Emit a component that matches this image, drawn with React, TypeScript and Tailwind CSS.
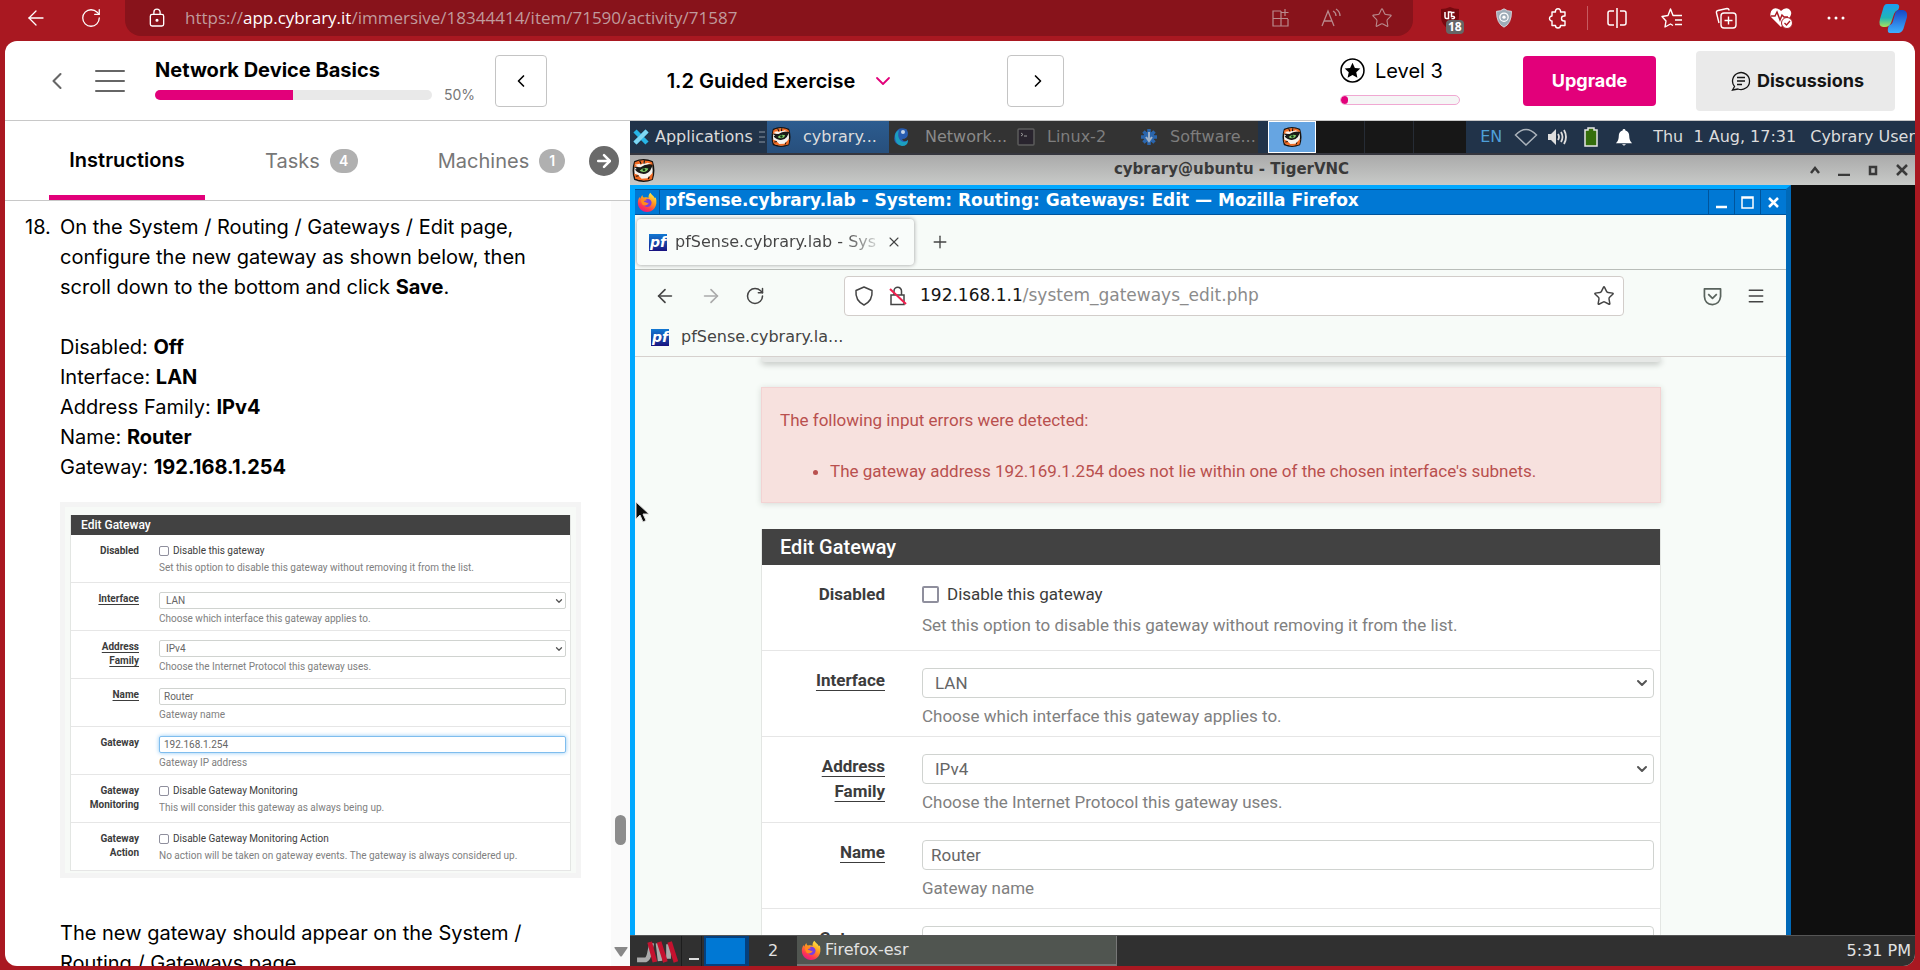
import React, { useId } from "react";
import {
  ArrowLeft,
  ArrowRight,
  ChevronDown,
  ChevronLeft,
  ChevronRight,
  Menu,
  Plus,
  RotateCw,
  Star,
  X,
} from "lucide-react";

type IconProps = { className?: string };

function FirefoxIcon({ className }: IconProps) {
  const id = useId();
  return (
    <svg viewBox="0 0 24 24" className={className} aria-hidden="true">
      <defs>
        <linearGradient id={id} x1="0.8" y1="0" x2="0.25" y2="1">
          <stop offset="0" stopColor="#fff04a" />
          <stop offset="0.4" stopColor="#ff9a1e" />
          <stop offset="0.75" stopColor="#ff3750" />
          <stop offset="1" stopColor="#e3158a" />
        </linearGradient>
      </defs>
      <path
        fill={`url(#${id})`}
        d="M16 1c1 2 4 3.500 5.500 6.500 1-.5 1-1.500 1-1.500C24 12 23.500 16 21 19.500 18.500 23 15 24 12 24 5.500 24 1 19 1 13c0-3 1-5.500 2.200-7l.5 2C5 5.500 5.500 4.500 6.500 3.500c0 1.500.5 2.500 2 3.200C10 6 12.500 6 14 7c-.5-2 .5-4.500 2-6Z"
      />
      <circle cx="12.500" cy="13" r="5" fill="#7a3fe0" />
      <path fill="#ff8a1e" d="M5 9c2.500-1.500 5-1 7 .8-2.500 0-3.500 1-3.800 2 2 .2 3.300 1.700 5.800 1.200-1 3-4.500 3.700-7 2.500C5.500 14 4.500 11.500 5 9Z" />
    </svg>
  );
}

function TigerIcon({ className }: IconProps) {
  return (
    <svg viewBox="0 0 24 24" className={className} aria-hidden="true">
      <path d="M3 3Q12-1 21 3q3 9 0 18-9 4-18 0Q0 12 3 3Z" fill="#f6f3ee" stroke="#15110e" strokeWidth="1.800" />
      <path d="M3 3.500q5-2.500 10-2l-1 3L6 7.500l-4 1ZM13 1.500q5 0 8 2l1 4-4-1-5-2ZM2 15l4 1.500 4 4 6-.5 6-6-1 7Q12 24 3.500 20.500Z" fill="#f26a22" />
      <path d="m2 8 7 .5Q15 4 22 6l-3 6q-3 4-8 3.500-5-.5-8-4.500l2-.5Z" fill="#1a1b18" />
      <path d="m3 6 5-1 2 2-4 .5ZM20 5l-4-1-4 2" fill="#f6f3ee" />
      <path d="M8 12q4-4 9-2-1 3.500-5 3.500-3 0-4-1.500Z" fill="#7fce6a" />
      <circle cx="12.500" cy="11.300" r="1.500" fill="#123614" />
      <path d="m8 2 1.500 3M13 1.500 12.500 5M4 18l3-.5M17 21l1-2.500" stroke="#15110e" strokeWidth="1.200" />
    </svg>
  );
}

function PfIcon({ className }: IconProps) {
  return (
    <span
      aria-hidden="true"
      className={`flex items-center justify-center bg-gradient-to-b from-[#1279d3] to-[#180f80] font-['DejaVu_Sans'] text-sm font-bold italic text-white leading-none ${className}`}
    >
      pf
    </span>
  );
}

function Divider() {
  return <span className="-mx-3.5 h-6 w-px bg-[#c75a60]" />;
}

function BrowserBar() {
  return (
    <div className="flex h-[41px] shrink-0 items-start bg-[#a91821] text-white">
      <div className="flex h-9 w-[125px] items-center gap-8 pl-6">
        <button aria-label="Back">
          <ArrowLeft className="size-[24px]" strokeWidth={1.3} />
        </button>
        <button aria-label="Refresh">
          <RotateCw className="size-[22px]" strokeWidth={1.4} />
        </button>
      </div>
      <div className="flex h-9 min-w-0 flex-1 items-center rounded-b-2xl bg-[#88131b] pl-[24px] pr-5 text-[#b98a8d]">
        <svg viewBox="0 0 18 22" className="h-5 w-4 text-white" fill="none" stroke="currentColor" strokeWidth="1.500" aria-hidden="true">
          <rect x="1.500" y="7" width="15" height="13" rx="2" />
          <path d="M5.500 7V4.500a3.500 3.500 0 0 1 7 0V7" />
          <circle cx="9" cy="13.500" r="1" fill="currentColor" />
        </svg>
        <p className="ml-5 flex-1 truncate font-['Open_Sans','Noto_Sans',sans-serif] text-[17px] text-[#c09a9c]">
          https://<span className="text-white">app.cybrary.it</span>/immersive/18344414/item/71590/activity/71587
        </p>
        <div className="flex items-center gap-[30px]">
          <button aria-label="App available">
            <svg viewBox="0 0 20 20" className="size-5" fill="none" stroke="currentColor" strokeWidth="1.200" aria-hidden="true">
              <path d="M10 3H2v15h15v-7M2 10.500h15M10 3v15M14 1v7M10.500 4.500h7" />
            </svg>
          </button>
          <button aria-label="Read aloud">
            <svg viewBox="0 0 20 20" className="size-5" fill="none" stroke="currentColor" strokeWidth="1.300" aria-hidden="true">
              <path d="M1 18 7 3l6 15M3 13h8M12 3q3 1.500 3 5M15 1q4 2.500 4 7" />
            </svg>
          </button>
          <button aria-label="Add to favorites">
            <Star className="size-[22px]" strokeWidth={1.2} />
          </button>
        </div>
      </div>
      <div className="flex h-9 w-[507px] items-center justify-between pl-[25px] pr-3">
        <button aria-label="uBlock, 18 blocked" className="relative size-6">
          <svg viewBox="0 0 24 24" className="size-6" aria-hidden="true">
            <path d="M12 1q4 2 9 2v8q0 8-9 13Q3 19 3 11V3q5 0 9-2Z" fill="#77090f" />
            <path d="M7 6v5q0 1.500 1.500 1.500h2V6h3M16.500 6.500h-3v4q3-.5 3 1t-3 1" fill="none" stroke="#fff" strokeWidth="1.500" />
          </svg>
          <span className="absolute left-[8px] top-[14px] rounded bg-[#666] px-0.5 font-['Open_Sans',sans-serif] text-xs font-bold leading-[14px]">18</span>
        </button>
        <button aria-label="Privacy shield">
          <svg viewBox="0 0 24 24" className="h-6 w-5" aria-hidden="true">
            <path d="M12 1q4 3 9 3 0 15-9 19Q3 19 3 4q5 0 9-3Z" fill="#9eacb8" stroke="#dfe5ea" />
            <circle cx="12" cy="11" r="5" fill="none" stroke="#fff" strokeWidth="1.500" />
            <circle cx="12" cy="11" r="2" fill="#fff" />
          </svg>
        </button>
        <button aria-label="Extensions">
          <svg viewBox="0 0 22 22" className="size-[22px]" fill="none" stroke="currentColor" strokeWidth="1.400" strokeLinejoin="round" aria-hidden="true">
            <path d="M5 5h3.500a2.600 2.600 0 1 1 5 0H18v4h-1a2.400 2.400 0 0 0 0 5h1v4.500h-4.500a2.500 2.500 0 0 1-5 0H5V14a2.500 2.500 0 1 1 0-5Z" />
          </svg>
        </button>
        <Divider />
        <button aria-label="Split screen">
          <svg viewBox="0 0 22 22" className="size-[22px]" fill="none" stroke="currentColor" strokeWidth="1.500" aria-hidden="true">
            <path d="M8 4H4a2 2 0 0 0-2 2v10q0 2 2 2h4M14 4h4a2 2 0 0 1 2 2v10q0 2-2 2h-4M11 1v20" />
          </svg>
        </button>
        <button aria-label="Favorites">
          <svg viewBox="0 0 22 22" className="size-[22px]" fill="none" stroke="currentColor" strokeWidth="1.400" strokeLinejoin="round" aria-hidden="true">
            <path d="M12 18.500 9.500 17 4 20l1-6-4-4.500 6-1L9.500 2 12 8.500h9M14 13h7M14 17.500h7" />
          </svg>
        </button>
        <button aria-label="Collections">
          <svg viewBox="0 0 22 22" className="size-[22px]" fill="none" stroke="currentColor" strokeWidth="1.400" aria-hidden="true">
            <path d="M4 16 1.500 6Q1 4 3 3.500l9-2q2 0 2 2" />
            <rect x="6" y="6" width="15" height="15" rx="3" />
            <path d="M13.500 9.500v8M9.500 13.500h8" />
          </svg>
        </button>
        <button aria-label="Browser essentials">
          <svg viewBox="0 0 24 24" className="size-6" aria-hidden="true">
            <path d="M12 21 2 11Q0 6 4 3q4-2 8 2 4-4 8-2 4 3 1 8Z" fill="#fff" />
            <path d="M2 10h4l2-4 3 8 2-5 2 2h4" fill="none" stroke="#a91821" strokeWidth="1.500" />
            <circle cx="18" cy="17" r="5.500" fill="#fff" stroke="#a91821" />
            <path d="m15.500 17 2 2 3.500-4" fill="none" stroke="#a91821" strokeWidth="1.300" />
          </svg>
        </button>
        <button aria-label="Settings and more">
          <svg viewBox="0 0 20 4" className="h-1 w-5" fill="currentColor" aria-hidden="true">
            <circle cx="3" cy="2" r="1.500" />
            <circle cx="10" cy="2" r="1.500" />
            <circle cx="17" cy="2" r="1.500" />
          </svg>
        </button>
        <button aria-label="Copilot">
          <svg viewBox="0 0 30 30" className="size-[30px]" aria-hidden="true">
            <defs>
              <linearGradient id="copilot-left" x2="0" y2="1">
                <stop stopColor="#1b9df0" />
                <stop offset="0.600" stopColor="#1fb6b8" />
                <stop offset="1" stopColor="#a9e25a" />
              </linearGradient>
              <linearGradient id="copilot-right" x2="0" y2="1">
                <stop stopColor="#1747c6" />
                <stop offset="1" stopColor="#3fb0ff" />
              </linearGradient>
            </defs>
            <path d="M9 1h9q4 0 3 4l-1 2q-3 1-4 4l-3 9q-2 4-6 4H5q-5-1-3-8l3-10q1-5 4-5Z" fill="url(#copilot-left)" />
            <path d="M20 7h5q5 1 4 7l-3 10q-1 5-5 6h-9q-3 0-2-5l1-3q3 0 4-4l2-7q1-4 4-4Z" fill="url(#copilot-right)" />
          </svg>
        </button>
      </div>
    </div>
  );
}

function CourseHeader() {
  return (
    <header className="flex h-20 shrink-0 items-center border-b border-[#c8c8c8] pr-5 text-black">
      <button aria-label="Back to course" className="ml-[38px] text-[#666]">
        <ChevronLeft className="size-7" strokeWidth={1.8} />
      </button>
      <button aria-label="Open menu" className="ml-6 text-[#666]">
        <svg viewBox="0 0 30 24" className="h-6 w-[30px]" stroke="currentColor" strokeWidth="2" strokeLinecap="round" aria-hidden="true">
          <path d="M1 2h28M1 12h28M1 22h28" />
        </svg>
      </button>
      <div className="ml-[30px] w-80 pt-0.5">
        <h1 className="text-xl font-bold leading-6">Network Device Basics</h1>
        <div className="mt-[3px] flex items-center gap-3">
          <div role="progressbar" aria-label="Course progress" aria-valuenow={50} className="h-2.5 w-[278px] overflow-hidden rounded-full bg-[#e9e9e9]">
            <div className="h-full w-1/2 bg-[#e2007a]" />
          </div>
          <span className="text-sm leading-5 text-[#777]">50%</span>
        </div>
      </div>
      <button aria-label="Previous activity" className="ml-5 flex h-[52px] w-[52px] items-center justify-center rounded-sm border border-[#c4c4c4]">
        <ChevronLeft className="size-5" />
      </button>
      <button className="flex w-[460px] items-center justify-center gap-4 pl-2 text-xl font-semibold">
        1.2 Guided Exercise
        <ChevronDown className="size-6 text-[#e2007a]" strokeWidth={1.8} />
      </button>
      <button aria-label="Next activity" className="flex h-[52px] w-[57px] items-center justify-center rounded-sm border border-[#c4c4c4] pl-1">
        <ChevronRight className="size-5" />
      </button>
      <div className="ml-auto w-[120px]">
        <div className="flex items-center gap-2.5 text-xl leading-[28px]">
          <svg viewBox="0 0 24 24" className="size-[25px]" aria-hidden="true">
            <circle cx="12" cy="12" r="11" fill="none" stroke="#000" strokeWidth="1.500" />
            <path d="m12 4.500 2.300 5 5.200.6-3.900 3.600 1.100 5.300-4.700-2.700L7.300 19l1.100-5.300-3.900-3.600 5.200-.6Z" />
          </svg>
          Level 3
        </div>
        <div role="progressbar" aria-label="Level progress" aria-valuenow={6} className="mt-2.5 h-2.5 overflow-hidden rounded-full border border-[#f0a8d2] bg-[#f5f5f5]">
          <div className="h-full w-[7px] rounded-full bg-[#e2007a]" />
        </div>
      </div>
      <button className="ml-[63px] h-[50px] w-[133px] rounded-sm bg-[#e2007a] text-lg font-bold text-white">Upgrade</button>
      <button className="ml-10 flex h-[60px] w-[199px] items-center justify-center gap-1.5 rounded-sm bg-[#eaeaea] pl-1 text-lg font-bold text-[#151515]">
        <svg viewBox="0 0 20 20" className="size-5" fill="none" stroke="currentColor" strokeWidth="1.300" aria-hidden="true">
          <path d="M3.500 15.500A8.500 8.500 0 1 1 7 18l-5.500 1ZM6 6.500h8M6 10h8M6 13.500h5" />
        </svg>
        Discussions
      </button>
    </header>
  );
}

const LARGE = {
  header: "h-9 pl-[18px] text-xl",
  row: "min-h-[86px] pt-[17px] pb-1.5 text-[17px] leading-[25px]",
  label: "w-[123px] pl-8",
  underline: "underline underline-offset-4",
  field: "ml-[37px] mr-1.5",
  control: "h-[30px] text-[17px] rounded",
  select: "pl-3",
  input: "px-2",
  help: "mt-1.5",
  box: "size-[17px] border-2",
  gap: "gap-2",
  chevron: "size-4 right-1 top-[7px]",
};

const SMALL: typeof LARGE = {
  header: "h-5 pl-2.5 text-xs",
  row: "min-h-12 pt-[9px] pb-1 text-[10px] leading-[14px]",
  label: "w-[68px] pl-4",
  underline: "underline underline-offset-2",
  field: "ml-5 mr-1",
  control: "h-[17px] text-[10px] rounded-xs",
  select: "pl-1.5",
  input: "px-1",
  help: "mt-[3px]",
  box: "size-[10px] border",
  gap: "gap-1",
  chevron: "size-2.5 right-0.5 top-1",
};

type Field = {
  label: string;
  help: string;
  kind: "check" | "select" | "text";
  value: string;
  linked?: boolean;
  focused?: boolean;
};

const FIELDS: Field[] = [
  { label: "Disabled", kind: "check", value: "Disable this gateway", help: "Set this option to disable this gateway without removing it from the list." },
  { label: "Interface", kind: "select", value: "LAN", help: "Choose which interface this gateway applies to.", linked: true },
  { label: "Address Family", kind: "select", value: "IPv4", help: "Choose the Internet Protocol this gateway uses.", linked: true },
  { label: "Name", kind: "text", value: "Router", help: "Gateway name", linked: true },
];

const EXAMPLE_FIELDS: Field[] = [
  ...FIELDS,
  { label: "Gateway", kind: "text", value: "192.168.1.254", help: "Gateway IP address", focused: true },
  { label: "Gateway Monitoring", kind: "check", value: "Disable Gateway Monitoring", help: "This will consider this gateway as always being up." },
  { label: "Gateway Action", kind: "check", value: "Disable Gateway Monitoring Action", help: "No action will be taken on gateway events. The gateway is always considered up." },
];

const LIVE_FIELDS: Field[] = [...FIELDS, { label: "Gateway", kind: "text", value: "", help: "Gateway IP address" }];

function GatewayForm({ fields, size }: { fields: Field[]; size: typeof LARGE }) {
  const base = useId();
  return (
    <section className="border-x border-[#e3e6e3] bg-white font-['Roboto',sans-serif] text-[#3c3c3c]">
      <h2 className={`flex items-center bg-[#424242] font-medium text-white ${size.header}`}>Edit Gateway</h2>
      {fields.map((f) => {
        const id = base + f.label;
        return (
          <div key={f.label} className={`flex items-start border-b border-[#e6e6e6] ${size.row}`}>
            <label htmlFor={id} className={`shrink-0 text-right font-bold ${size.label} ${f.linked ? size.underline : ""}`}>
              {f.label}
            </label>
            <div className={`min-w-0 flex-1 ${size.field}`}>
              {f.kind === "check" && (
                <label className={`flex items-center ${size.gap}`}>
                  <input id={id} type="checkbox" className={`appearance-none rounded-xs border-[#8f8f9d] bg-white ${size.box}`} />
                  {f.value}
                </label>
              )}
              {f.kind === "select" && (
                <div className="relative">
                  <select id={id} defaultValue={f.value} className={`block w-full appearance-none border border-[#d0d3d0] bg-white text-[#666] ${size.control} ${size.select}`}>
                    <option>{f.value}</option>
                  </select>
                  <ChevronDown className={`pointer-events-none absolute text-[#555] ${size.chevron}`} strokeWidth={3} />
                </div>
              )}
              {f.kind === "text" && (
                <input
                  id={id}
                  type="text"
                  defaultValue={f.value}
                  className={`block w-full border bg-white text-[#666] ${size.control} ${size.input} ${f.focused ? "border-[#7fbdee] shadow-[0_0_4px_#8cc8f5]" : "border-[#d0d3d0]"}`}
                />
              )}
              <p className={`truncate text-[#808080] ${size.help}`}>{f.help}</p>
            </div>
          </div>
        );
      })}
    </section>
  );
}

const ANSWERS = [
  ["Disabled", "Off"],
  ["Interface", "LAN"],
  ["Address Family", "IPv4"],
  ["Name", "Router"],
  ["Gateway", "192.168.1.254"],
];

function InstructionsPanel() {
  return (
    <aside className="flex w-[625px] shrink-0 flex-col text-black">
      <nav className="flex h-20 shrink-0 items-stretch border-b border-[#c8c8c8] pl-11 text-xl text-[#777]">
        <button className="w-[156px] border-b-[5px] border-[#e2007a] pt-1 font-semibold text-black">Instructions</button>
        <button className="ml-[60px] flex items-center gap-2.5">
          Tasks
          <span className="flex h-6 w-7 items-center justify-center rounded-full bg-[#b0b0b0] text-sm font-semibold text-white">4</span>
        </button>
        <button className="ml-20 flex items-center gap-2.5">
          Machines
          <span className="flex h-6 w-[26px] items-center justify-center rounded-full bg-[#b0b0b0] text-sm font-semibold text-white">1</span>
        </button>
        <button aria-label="Next tab" className="my-auto ml-auto mr-[11px] flex size-[30px] items-center justify-center rounded-full bg-[#6a6a6a] text-white">
          <ArrowRight className="size-5" strokeWidth={3} />
        </button>
      </nav>
      <div className="flex min-h-0 flex-1">
        <div className="min-w-0 flex-1 overflow-hidden pl-5 pr-[30px] pt-[11px] text-xl leading-[30px]">
          <div className="flex">
            <span className="w-[35px] shrink-0">18.</span>
            <div className="min-w-0 flex-1">
              <p>
                On the System / Routing / Gateways / Edit page, configure the new gateway as shown below, then scroll down to the bottom and click <b>Save</b>.
              </p>
              <ul className="mt-[30px]">
                {ANSWERS.map(([k, v]) => (
                  <li key={k}>
                    {k}: <b>{v}</b>
                  </li>
                ))}
              </ul>
              <figure className="mt-5 border-[5px] border-[#f4f4f4] bg-[#f7faf7] px-[5px] pt-2 pb-0.5">
                <GatewayForm fields={EXAMPLE_FIELDS} size={SMALL} />
              </figure>
              <p className="mt-10">The new gateway should appear on the System / Routing / Gateways page.</p>
            </div>
          </div>
        </div>
        <div className="flex w-[19px] shrink-0 flex-col items-center bg-[#fafafa] pb-[9px]">
          <div className="mt-auto mb-[102px] h-[30px] w-[11px] rounded-full bg-[#8c8c8c]" />
          <svg viewBox="0 0 14 10" className="h-2.5 w-3.5" fill="#888" aria-hidden="true">
            <path d="M1 0h12q1 0 .5 1L8 9q-1 1-2 0L.5 1Q0 0 1 0Z" />
          </svg>
        </div>
      </div>
    </aside>
  );
}

function DesktopPanel() {
  return (
    <div className="flex h-[34px] shrink-0 items-stretch border-b-2 border-[#35363e] bg-[#213349] text-base text-[#dcdcdc]">
      <button className="flex w-[137px] items-center gap-1.5 pl-[3px]">
        <svg viewBox="0 0 16 18" className="h-[18px] w-4 shrink-0" aria-hidden="true">
          <path d="m2 3 12 12M14 3 2 15" stroke="#27b5e6" strokeWidth="4.500" />
          <path d="M14 3 2 15" stroke="#7fd6f2" strokeWidth="4" />
        </svg>
        Applications
        <svg viewBox="0 0 6 12" className="h-3 w-1.5 shrink-0" stroke="#8d98a5" aria-hidden="true">
          <path d="M0 1h6M0 6h6M0 11h6" />
        </svg>
      </button>
      <button className="flex w-[122px] items-center gap-3 bg-gradient-to-b from-[#2c5c90] to-[#274f7c] pl-1">
        <TigerIcon className="size-5 shrink-0" />
        cybrary...
      </button>
      <button className="flex w-[123px] items-center gap-3.5 bg-[#333] pl-1 text-[#8a8a8a]">
        <svg viewBox="0 0 18 20" className="h-5 w-[18px] shrink-0" aria-hidden="true">
          <path d="M13 2Q5-1 2 7q-3 9 5 11 7 1 8-5-4 3-6-1 6 0 6-6-1-4-2-4Z" fill="#285cb0" />
          <path d="M2 9q0 9 7 10 6 0 6-6-4 4-8 0Q4 9 6 3 2 5 2 9Z" fill="#1b9fc0" />
          <circle cx="10" cy="5" r="2" fill="#c7d5e8" />
        </svg>
        Network...
      </button>
      <button className="flex w-[123px] items-center gap-3 bg-[#333] pl-[5px] text-[#7e7e7e]">
        <svg viewBox="0 0 18 18" className="size-[18px] shrink-0" aria-hidden="true">
          <rect x="1" y="1" width="16" height="16" rx="1" fill="#29242e" stroke="#5c5c5c" strokeWidth="1.500" />
          <path d="m4 5 2 1.500L4 8M7 8h3" stroke="#999" fill="none" />
        </svg>
        Linux-2
      </button>
      <button className="flex w-[123px] items-center gap-3 bg-[#333] pl-[5px] text-[#7e7e7e]">
        <svg viewBox="0 0 18 18" className="size-[18px] shrink-0" aria-hidden="true">
          <path d="M9 1v16M1 9h16M3.500 3.500l11 11M14.500 3.500l-11 11" stroke="#2b66ad" strokeWidth="3.500" />
          <circle cx="9" cy="9" r="5.500" fill="#2b66ad" />
          <path d="M9 4v8M6 9l3 4 3-4" stroke="#9fb2c9" strokeWidth="2" fill="none" />
        </svg>
        Software...
      </button>
      <div className="ml-2.5 flex w-[198px] bg-[#171717]">
        <div className="flex w-12 items-center justify-center border border-white bg-[#66a5e2]">
          <TigerIcon className="size-5" />
        </div>
        <div className="w-[49px] border-r border-[#262c35]" />
        <div className="w-[49px] border-r border-[#262c35]" />
      </div>
      <div className="ml-auto flex items-center whitespace-nowrap pl-3">
        <span className="text-[#4f9fd8]">EN</span>
        <svg viewBox="0 0 24 18" className="ml-3 h-[18px] w-6" fill="none" stroke="#aab2ba" strokeWidth="1.500" aria-hidden="true">
          <path d="M1.500 7Q12-4 22.500 7L12 17Z" />
        </svg>
        <svg viewBox="0 0 20 18" className="ml-2.5 h-[18px] w-5" fill="none" stroke="#dedede" strokeWidth="1.800" aria-hidden="true">
          <path d="M0 6h3l5-5v16l-5-5H0Z" fill="#dedede" stroke="none" />
          <path d="M10 6q2 3 0 6M13 4q3 5 0 10M16 2q4 7 0 14" />
        </svg>
        <svg viewBox="0 0 14 20" className="ml-4 h-5 w-3.5" aria-hidden="true">
          <path d="M1 3h3V1h6v2h3v16H1Z" fill="#356e0c" stroke="#e6e6e6" strokeWidth="1.500" />
        </svg>
        <svg viewBox="0 0 18 20" className="ml-[17px] h-[19px] w-[18px]" fill="#fff" aria-hidden="true">
          <path d="M9 1q1.500 0 1.500 1.500 4 1 4 6 0 5 3 7.500h-17q3-2.500 3-7.500 0-5 4-6Q7.500 1 9 1Zm-2 16h4q-2 3-4 0Z" />
        </svg>
        <span className="ml-5 whitespace-pre">Thu  1 Aug, 17:31</span>
        <span className="ml-3.5">Cybrary User</span>
      </div>
    </div>
  );
}

function VncTitleBar() {
  return (
    <div className="flex h-[30px] shrink-0 items-center bg-gradient-to-b from-[#aaaaaa] to-[#c8cac8] pl-0.5 pr-1.5 text-[#3a3a3a]">
      <TigerIcon className="size-[23px]" />
      <p className="flex-1 px-3 pb-0.5 text-center text-[15px] font-bold">cybrary@ubuntu - TigerVNC</p>
      <div className="flex items-center gap-[15px]">
        {["m2 9 4-5 4 5", "M0 11h12", "M3 3h6v7H3Z", "m1 1 10 10M11 1 1 11"].map((d) => (
          <svg key={d} viewBox="0 0 12 12" className="h-3 w-3.5" fill="none" stroke="#3a3a3a" strokeWidth="2.500" aria-hidden="true">
            <path d={d} />
          </svg>
        ))}
      </div>
    </div>
  );
}

function FirefoxWindow() {
  return (
    <div className="relative flex min-h-0 min-w-0 flex-1 flex-col border-x-[5px] border-t-4 border-l-[#00a8ff] border-r-[#0069b8] border-t-[#00a8ff] bg-[#f7fbf8] text-[#444]">
      <div className="flex h-[26px] shrink-0 items-center border-y border-[#00549b] bg-[#0078d4] text-white">
        <span className="flex h-full items-center border-r border-[#00549b] px-0.5">
          <FirefoxIcon className="size-5" />
        </span>
        <h2 className="min-w-0 flex-1 truncate pb-1 pl-[5px] text-[17px] font-bold leading-6">
          pfSense.cybrary.lab - System: Routing: Gateways: Edit — Mozilla Firefox
        </h2>
        {[
          ["Minimize", "M1 11h11"],
          ["Maximize", "M1 1h11v11H1ZM1 2h11"],
          ["Close", "m2 2 9 9M11 2l-9 9"],
        ].map(([name, d]) => (
          <button key={name} aria-label={name} className="flex h-full w-[26px] items-center justify-center border-l border-[#00549b]">
            <svg viewBox="0 0 13 13" className="size-[13px]" fill="none" stroke="#fff" strokeWidth={name === "Maximize" ? 1.5 : 2.5} aria-hidden="true">
              <path d={d} />
            </svg>
          </button>
        ))}
      </div>
      <div className="flex h-[55px] shrink-0 items-center border-b border-[#b9bdb9] pl-0.5">
        <div className="flex h-[46px] w-[277px] items-center rounded bg-[#f9fcfa] pl-3 pr-3 text-base shadow-[0_0_4px_#9a9a9a]">
          <PfIcon className="h-[17px] w-[18px]" />
          <span className="ml-2 flex-1 overflow-hidden whitespace-nowrap bg-gradient-to-r from-[#444] from-80% to-transparent bg-clip-text text-transparent">
            pfSense.cybrary.lab - Sys
          </span>
          <button aria-label="Close tab" className="shrink-0">
            <X className="size-4" strokeWidth={1.6} />
          </button>
        </div>
        <button aria-label="New tab" className="ml-4">
          <Plus className="size-5" strokeWidth={1.6} />
        </button>
      </div>
      <div className="flex h-[52px] shrink-0 items-center pl-[19px] pr-5">
        <button aria-label="Back">
          <ArrowLeft className="size-[22px]" strokeWidth={1.8} />
        </button>
        <button aria-label="Forward" className="ml-6 text-[#aaa]">
          <ArrowRight className="size-[22px]" strokeWidth={1.8} />
        </button>
        <button aria-label="Reload" className="ml-[23px]">
          <RotateCw className="size-5" strokeWidth={1.8} />
        </button>
        <div className="mx-[79px] flex h-10 min-w-0 flex-1 items-center rounded border border-[#d2cdca] bg-white pl-[9px] pr-2">
          <svg viewBox="0 0 20 20" className="size-5 shrink-0" fill="none" stroke="#444" strokeWidth="1.500" strokeLinejoin="round" aria-hidden="true">
            <path d="m10 1 8 3.500q1 10-8 14.500Q1 14.500 2 4.500Z" />
          </svg>
          <svg viewBox="0 0 20 20" className="ml-3.5 size-5 shrink-0" fill="none" stroke="#444" strokeWidth="1.500" aria-hidden="true">
            <path d="M3 9h13v9.500H3ZM6 9V5a3.700 3.700 0 0 1 7.500 0v4" />
            <path d="m2 3 16 15" stroke="#f0204f" strokeWidth="2" />
          </svg>
          <span className="ml-3 flex-1 truncate text-[17px] text-[#8b8b8b]">
            <span className="text-[#151515]">192.168.1.1</span>/system_gateways_edit.php
          </span>
          <button aria-label="Bookmark">
            <Star className="size-[22px]" strokeWidth={1.6} />
          </button>
        </div>
        <button aria-label="Save to Pocket">
          <svg viewBox="0 0 20 20" className="size-[19px]" fill="none" stroke="#59635d" strokeWidth="1.800" strokeLinejoin="round" aria-hidden="true">
            <path d="M1.500 2h17v8q-1 8-8.500 8.500Q2 18 1.500 10ZM5.500 7.500 10 12l4.500-4.500" />
          </svg>
        </button>
        <button aria-label="Application menu" className="ml-6">
          <Menu className="size-5" strokeWidth={1.8} />
        </button>
      </div>
      <div className="flex h-[35px] shrink-0 items-center border-b border-[#d6d1ce] pb-1 pl-4">
        <a href="#bookmark" className="flex items-center gap-3 text-base">
          <PfIcon className="h-[17px] w-[18px]" />
          pfSense.cybrary.la...
        </a>
      </div>
      <div className="min-h-0 flex-1 overflow-hidden pl-[126px] pr-[125px] font-['Roboto',sans-serif] text-[17px]">
        <div className="h-[5px] rounded-b bg-[#e6e8e6] shadow-[0_2px_6px_#b4b8b4]" />
        <div role="alert" className="mt-[25px] h-[116px] border border-[#f3d3d3] bg-[#f7e1de] px-[18px] pt-5 leading-6 text-[#b9504e] shadow-[0_1px_6px_#d5dad5]">
          <p>The following input errors were detected:</p>
          <ul className="mt-[27px] list-disc pl-[50px]">
            <li>The gateway address 192.169.1.254 does not lie within one of the chosen interface's subnets.</li>
          </ul>
        </div>
        <div className="mt-[26px]">
          <GatewayForm fields={LIVE_FIELDS} size={LARGE} />
        </div>
      </div>
      <svg viewBox="0 0 15 22" className="absolute left-0 top-[312px] h-[22px] w-[15px]" aria-hidden="true">
        <path d="M1 1v17l4-4 3 7 3-1.500-3-6.500h6Z" fill="#0b0b0b" stroke="#ddd" />
      </svg>
    </div>
  );
}

function Taskbar() {
  return (
    <div className="flex h-[31px] shrink-0 items-center rounded-br-lg border-t border-[#555] bg-[#303030] pl-[3px] pr-1 text-base text-[#e2e2e2]">
      <button aria-label="Window manager menu" className="flex h-full w-[49px] items-center justify-center border-r border-[#1d1d1d]">
        <svg viewBox="0 0 40 22" className="h-[25px] w-[42px]" fill="none" aria-hidden="true">
          <path d="M1 19h8q3-1 4-7l2-9M21 3l2 17M31 4v14" stroke="#aaa" strokeWidth="4.500" />
          <path d="m13 2 5 19M22 2l6 19M32 2l6 19" stroke="#c4122f" strokeWidth="4.500" />
        </svg>
      </button>
      <button aria-label="Show desktop" className="ml-1 flex h-full w-4 items-end justify-center border-r border-[#1d1d1d] pb-1.5">
        <span className="h-0.5 w-2.5 bg-[#ddd]" />
      </button>
      <button aria-label="Workspace 1" className="ml-0.5 h-full w-[45px] border-2 border-r-4 border-[#04407e] bg-[#0078d4]" />
      <button className="w-12 text-center">2</button>
      <button className="flex h-full w-80 items-center gap-1 border-b-2 border-r border-b-[#777] border-r-[#777] bg-[#505550] pl-1">
        <FirefoxIcon className="size-5" />
        Firefox-esr
      </button>
      <time className="ml-auto text-base">5:31 PM</time>
    </div>
  );
}

function RemoteDesktop() {
  return (
    <section className="flex min-w-0 flex-1 flex-col font-['DejaVu_Sans',sans-serif]">
      <DesktopPanel />
      <VncTitleBar />
      <div className="flex min-h-0 flex-1 bg-[#0f0f0f] pr-[124px]">
        <FirefoxWindow />
      </div>
      <Taskbar />
    </section>
  );
}

export default function App() {
  return (
    <div className="flex h-screen flex-col overflow-hidden bg-[#a91821] font-['Inter',sans-serif]">
      <BrowserBar />
      <main className="mx-[5px] mb-1 flex min-h-0 flex-1 flex-col overflow-hidden rounded-xl bg-white">
        <CourseHeader />
        <div className="flex min-h-0 flex-1">
          <InstructionsPanel />
          <RemoteDesktop />
        </div>
      </main>
    </div>
  );
}
